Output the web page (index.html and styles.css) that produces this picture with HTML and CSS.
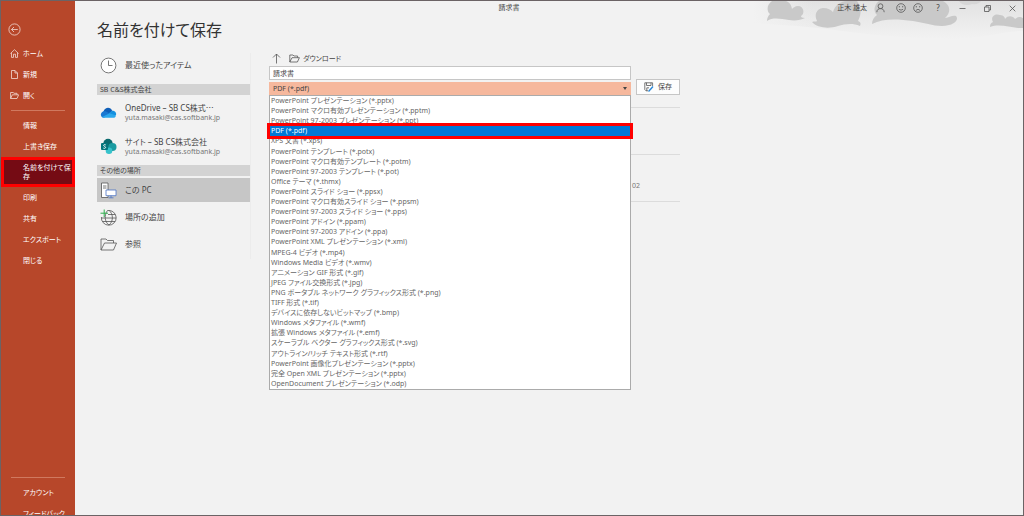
FILE: index.html
```html
<!DOCTYPE html>
<html lang="ja">
<head>
    <meta charset="UTF-8">
    <meta name="viewport" content="width=device-width, initial-scale=1.0">
    <title>名前を付けて保存</title>
    <link rel="stylesheet" href="styles.css">
</head>
<body>
    <nav class="sidebar">
        <button class="back-btn" aria-label="戻る">
            <svg width="13" height="13" viewBox="0 0 13 13"><circle cx="6.5" cy="6.5" r="5.6"/><path d="M9.8 6.5H3.5M6 4L3.5 6.5L6 9"/></svg>
        </button>
        <a class="nav-item" href="#">
            <svg width="9" height="9" viewBox="0 0 9 9"><path d="M.5 4.5L4.5.7L8.5 4.5M1.5 3.8V8.4H3.5V5.2H5.5V8.4H7.5V3.8"/></svg>
            ホーム
        </a>
        <a class="nav-item" href="#">
            <svg width="9" height="9" viewBox="0 0 9 9"><path d="M1.5.5H5L7.5 3V8.5H1.5ZM5 .5V3H7.5"/></svg>
            新規
        </a>
        <a class="nav-item" href="#">
            <svg width="9" height="9" viewBox="0 0 9 9"><path d="M.6 7.5V1.5H3.2L4 2.3H7V3.8M.6 7.5L2.3 3.8H8.6L7 7.5Z"/></svg>
            開く
        </a>
        <hr>
        <a class="nav-item" href="#">情報</a>
        <a class="nav-item" href="#">上書き保存</a>
        <a class="nav-item active" href="#">名前を付けて保存</a>
        <a class="nav-item" href="#">印刷</a>
        <a class="nav-item" href="#">共有</a>
        <a class="nav-item" href="#">エクスポート</a>
        <a class="nav-item" href="#">閉じる</a>
        <div class="nav-bottom">
            <hr>
            <a class="nav-item" href="#">アカウント</a>
            <a class="nav-item" href="#">フィードバック</a>
        </div>
    </nav>

    <main class="content">
        <svg class="clouds" width="270" height="40" viewBox="0 0 270 40">
            <defs>
                <linearGradient id="haze" x1="0" y1="0" x2="0" y2="1">
                    <stop offset="0" stop-color="#e2e2e2"/>
                    <stop offset="1" stop-color="#f2f2f2"/>
                </linearGradient>
                <linearGradient id="edge" x1="0" y1="0" x2="1" y2="0">
                    <stop offset="0" stop-color="#f2f2f2"/>
                    <stop offset="1" stop-color="#f2f2f2" stop-opacity="0"/>
                </linearGradient>
            </defs>
            <path fill="url(#haze)" d="M0 0H270V30C250 30 232 37 200 38C160 38 120 34 90 30C60 26 30 24 0 22Z"/>
            <rect fill="url(#edge)" width="60" height="40"/>
            <path fill="#c9c9c9" d="M19 0C13 4 14 11 17 13C15 15 14 17 14 20C20 16 28 18 36 19C42 20 48 19 52 17C49 17 48 16 48 15C52 13 51 5 45 5C42 5 40 7 39 8C38 3 36 1 33 0Z"/>
            <path fill="#c9c9c9" d="M59 21C61 20 63 21 64 20C61 14 63 8 70 7C75 7 78 9 80 11C82 4 88 0 94 0H104C108 5 109 13 105 20C108 21 108 23 107 25C100 22 92 23 85 25C76 28 64 27 59 21Z"/>
            <path fill="#c9c9c9" d="M126 0H190C198 4 198 12 192 17C196 17 199 14 203 15C206 18 202 23 196 24C185 27 174 22 160 20C145 18 130 17 119 23C119 19 121 16 124 14C120 10 121 4 126 0Z"/>
            <path fill="#d6d6d6" d="M206 0C208 4 214 5 219 3C223 4 227 2 228 0Z"/>
            <path fill="#c9c9c9" d="M237 26C237 23 238 22 240 21C237 16 242 12 247 14C251 14 252 17 252 18C255 14 260 15 262 18C265 15 268 16 270 17V27C260 28 248 22 237 26Z"/>
        </svg>

        <header class="titlebar">
            <span class="doc-title">請求書</span>
            <span class="user">正木 雄太</span>
            <svg class="person" width="9" height="10" viewBox="0 0 9 10"><circle cx="4.5" cy="3.2" r="2.4"/><path d="M.8 9.2C1 6.6 2.4 5.6 4.5 5.6S8 6.6 8.2 9.2"/></svg>
            <svg class="smile" width="10" height="10" viewBox="0 0 10 10"><circle cx="5" cy="5" r="4.3"/><path d="M3.3 3V4.4M6.7 3V4.4M2.9 6.3Q5 8 7.1 6.3"/></svg>
            <svg class="frown" width="10" height="10" viewBox="0 0 10 10"><circle cx="5" cy="5" r="4.3"/><path d="M3.3 3V4.4M6.7 3V4.4M2.9 7.4Q5 5.2 7.1 7.4"/></svg>
            <button class="help">?</button>
            <button class="win-btn" aria-label="最小化"><svg width="7" height="7" viewBox="0 0 7 7"><path d="M.5 3.5H6.5"/></svg></button>
            <button class="win-btn" aria-label="元に戻す"><svg width="7" height="7" viewBox="0 0 7 7"><path d="M.5 2H5V6.5H.5ZM2 2V.5H6.5V5H5"/></svg></button>
            <button class="win-btn" aria-label="閉じる"><svg width="7" height="7" viewBox="0 0 7 7"><path d="M.7.7L6.3 6.3M6.3.7L.7 6.3"/></svg></button>
        </header>

        <h1>名前を付けて保存</h1>

        <div class="panes">
            <section class="places">
                <a class="place recent" href="#">
                    <svg width="17" height="17" viewBox="0 0 17 17"><circle class="white" cx="8.5" cy="8.5" r="7.4"/><path d="M8.5 3.5V8.5H12.5"/></svg>
                    <span>最近使ったアイテム</span>
                </a>
                <h2>SB C&amp;S株式会社</h2>
                <a class="place account" href="#">
                    <svg class="solid" width="17" height="17" viewBox="0 0 17 17">
                        <path fill="#0f5fb8" d="M3.5 7.5C5 3 10.5 2.5 12.3 7L9 10L3 9Z"/>
                        <path fill="#1490df" d="M9 9L12.2 6.7C15 6.7 16.6 8.8 16 11L12 13Z"/>
                        <path fill="#1a78d2" d="M1 11.5C.3 8.6 3.2 6.4 6 7.4L11 10L4 13.7C2 13.7 1.2 12.5 1 11.5Z"/>
                        <path fill="#2ba7ec" d="M2 12.9L9.7 9.3L16 11.4C15.7 13 14.7 13.7 13.3 13.7H4Q2.7 13.7 2 12.9Z"/>
                    </svg>
                    <span>OneDrive – SB CS株式⋯<small>yuta.masaki@cas.softbank.jp</small></span>
                </a>
                <a class="place account" href="#">
                    <svg class="solid" width="17" height="17" viewBox="0 0 17 17">
                        <circle fill="#0b6a6e" cx="8" cy="5.5" r="4.7"/>
                        <circle fill="#1a9ba1" cx="12.4" cy="9" r="4.1"/>
                        <circle fill="#37c2cb" cx="9" cy="12.7" r="3.3"/>
                        <rect fill="#04757b" x="1" y="5" width="7" height="7" rx="1"/>
                        <path fill="none" stroke="#fff" stroke-width=".9" d="M5.8 7C5 6.3 3.6 6.5 3.6 7.4C3.6 8.6 5.6 8.2 5.6 9.5C5.6 10.5 4 10.6 3.3 10"/>
                    </svg>
                    <span>サイト – SB CS株式会社<small>yuta.masaki@cas.softbank.jp</small></span>
                </a>
                <h2>その他の場所</h2>
                <a class="place selected" href="#">
                    <svg width="17" height="17" viewBox="0 0 17 17"><path class="white" d="M1.5 1H8V15.5H1.5Z"/><path d="M3 4H6.5M3 6H6.5"/><path class="blue" d="M6 8H16V13.7H6ZM11 13.7V15.8M8.5 15.8H13.5"/></svg>
                    <span>この PC</span>
                </a>
                <a class="place" href="#">
                    <svg width="17" height="17" viewBox="0 0 17 17"><path d="M7.5 1.5A7.4 7.4 0 1 1 1.4 8M7.5 1.5C4 6 4.5 13 9 16M9 1.3C13.5 5 13.5 12.5 9 16M8 5.5H15.2M1.8 9H16.2M2.8 12.5H15.2"/><path class="green" d="M4.2.5V8M.5 4.2H8"/></svg>
                    <span>場所の追加</span>
                </a>
                <a class="place" href="#">
                    <svg width="17" height="17" viewBox="0 0 17 17"><path d="M1 14V3H6L7.5 4.5H13.5V7M1 14L4.5 7H16.5L13.5 14Z"/></svg>
                    <span>参照</span>
                </a>
            </section>

            <section class="save-form">
                <div class="path">
                    <button class="up-btn" aria-label="1 つ上のレベル"><svg width="9" height="11" viewBox="0 0 9 11"><path d="M4.5 10.5V1M1 4.5L4.5 1L8 4.5"/></svg></button>
                    <svg width="11" height="9" viewBox="0 0 11 9"><path d="M.8 8V1H4L5 2H8.6V3.7M.8 8L3 3.7H10.4L8.4 8Z"/></svg>
                    ダウンロード
                </div>
                <div class="form-row">
                    <div class="fields">
                        <input class="file-name" type="text" value="請求書" aria-label="ファイル名">
                        <div class="type-box">
                            <select class="file-type" aria-label="ファイルの種類">
                                <option>PDF (*.pdf)</option>
                            </select>
                            <ul class="type-list" role="listbox" aria-label="ファイルの種類">
                                <li role="option">PowerPoint プレゼンテーション (*.pptx)</li>
                                <li role="option">PowerPoint マクロ有効プレゼンテーション (*.pptm)</li>
                                <li role="option">PowerPoint 97-2003 プレゼンテーション (*.ppt)</li>
                                <li role="option" class="current" aria-selected="true">PDF (*.pdf)</li>
                                <li role="option">XPS 文書 (*.xps)</li>
                                <li role="option">PowerPoint テンプレート (*.potx)</li>
                                <li role="option">PowerPoint マクロ有効テンプレート (*.potm)</li>
                                <li role="option">PowerPoint 97-2003 テンプレート (*.pot)</li>
                                <li role="option">Office テーマ (*.thmx)</li>
                                <li role="option">PowerPoint スライド ショー (*.ppsx)</li>
                                <li role="option">PowerPoint マクロ有効スライド ショー (*.ppsm)</li>
                                <li role="option">PowerPoint 97-2003 スライド ショー (*.pps)</li>
                                <li role="option">PowerPoint アドイン (*.ppam)</li>
                                <li role="option">PowerPoint 97-2003 アドイン (*.ppa)</li>
                                <li role="option">PowerPoint XML プレゼンテーション (*.xml)</li>
                                <li role="option">MPEG-4 ビデオ (*.mp4)</li>
                                <li role="option">Windows Media ビデオ (*.wmv)</li>
                                <li role="option">アニメーション GIF 形式 (*.gif)</li>
                                <li role="option">JPEG ファイル交換形式 (*.jpg)</li>
                                <li role="option">PNG ポータブル ネットワーク グラフィックス形式 (*.png)</li>
                                <li role="option">TIFF 形式 (*.tif)</li>
                                <li role="option">デバイスに依存しないビットマップ (*.bmp)</li>
                                <li role="option">Windows メタファイル (*.wmf)</li>
                                <li role="option">拡張 Windows メタファイル (*.emf)</li>
                                <li role="option">スケーラブル ベクター グラフィックス形式 (*.svg)</li>
                                <li role="option">アウトライン/リッチ テキスト形式 (*.rtf)</li>
                                <li role="option">PowerPoint 画像化プレゼンテーション (*.pptx)</li>
                                <li role="option">完全 Open XML プレゼンテーション (*.pptx)</li>
                                <li role="option">OpenDocument プレゼンテーション (*.odp)</li>
                            </ul>
                        </div>
                    </div>
                    <button class="save-btn">
                        <svg width="10" height="10" viewBox="0 0 10 10"><path d="M.8.8H8.6V4M4 8.8H2L.8 7.6V.8M2.5.8V3.5H7V.8M2.8 8.8V5.8H5"/><path class="pen" d="M4.5 9.5L9 4.5"/></svg>
                        保存
                    </button>
                </div>
                <div class="files">
                    <div class="file-head"></div>
                    <div class="file-row"></div>
                    <div class="file-row">02</div>
                </div>
            </section>
        </div>
    </main>
</body>
</html>
```
FILE: styles.css
```css
* {
    margin: 0;
    padding: 0;
    box-sizing: border-box;
}

body {
    font-family: "Noto Sans", "Noto Sans CJK JP", sans-serif;
    font-feature-settings: "palt";
    font-size: 7px;
    line-height: 10px;
    color: #444;
    background: #f2f2f2;
    height: 100vh;
    display: flex;
    overflow: hidden;
    border: 1px solid #6b6365;
}

a {
    color: inherit;
    text-decoration: none;
}

button,
input,
select {
    font: inherit;
    font-feature-settings: inherit;
    color: inherit;
    background: none;
    border: none;
}

svg {
    display: block;
    flex: none;
    fill: none;
    stroke: #555;
    stroke-width: 0.8;
}

/* sidebar */
.sidebar {
    width: 74px;
    flex: none;
    display: flex;
    flex-direction: column;
    background: #b7472a;
    color: #fff;
    padding-top: 22px;
    overflow: hidden;
}

.sidebar svg {
    stroke: #f3dcd6;
}

.back-btn {
    align-self: flex-start;
    margin: 0 0 7px 7px;
}

.nav-item {
    flex: none;
    display: flex;
    align-items: center;
    gap: 4px;
    height: 21px;
    padding-left: 22px;
    line-height: 9px;
}

.nav-item svg {
    margin-left: -13px;
}

.nav-item.active {
    height: 30px;
    padding: 0 1px 0 19px;
    background: #750b14;
    border: 3px solid #f00;
}

.sidebar hr {
    flex: none;
    border: none;
    border-top: 1px solid #d0795f;
    margin: 4px 10px;
}

.nav-bottom {
    flex: none;
    height: 42px;
    margin-top: auto;
    overflow: hidden;
}

/* main area */
.content {
    flex: 1;
    min-width: 0;
    position: relative;
}

.clouds {
    position: absolute;
    top: 0;
    right: 0;
    stroke: none;
}

.titlebar {
    position: relative;
    height: 14px;
    display: flex;
    align-items: center;
    justify-content: flex-end;
    padding-right: 7px;
}

.doc-title {
    position: absolute;
    left: 0;
    right: 80px;
    text-align: center;
}

.person {
    margin-left: 9px;
}

.smile {
    margin-left: 11px;
}

.frown {
    margin-left: 7px;
}

.help {
    width: 8px;
    margin: 0 17px 0 11px;
    font-size: 8px;
}

.win-btn {
    margin-left: 18px;
}

.help + .win-btn {
    margin-left: 0;
}

h1 {
    font-size: 16px;
    font-weight: 400;
    line-height: 26px;
    padding-left: 22px;
    margin: 2px 0 10px;
    color: #333;
}

.panes {
    display: flex;
}

/* places list */
.places {
    width: 154px;
    flex: none;
    margin-left: 22px;
    border-right: 1px solid #ececec;
}

.places h2 {
    font-size: 7px;
    font-weight: 400;
    line-height: 11px;
    padding-left: 3px;
    margin-bottom: 2px;
    background: #d3d3d3;
}

.place {
    display: flex;
    align-items: center;
    gap: 8px;
    height: 24px;
    margin-bottom: 3px;
    padding-left: 3px;
    font-size: 8px;
}

.place.recent {
    margin-bottom: 7px;
}

.place.account {
    height: 31px;
}

.place.selected {
    background: #c6c6c6;
}

.place small {
    display: block;
    font-size: 7px;
    line-height: 9px;
    color: #777;
}

.solid {
    stroke: none;
}

.white {
    fill: #fff;
}

.blue {
    fill: #fff;
    stroke: #4a72c4;
}

.green {
    stroke: #2fae4e;
    stroke-width: 1;
}

/* save form */
.save-form {
    width: 411px;
    margin-left: 18px;
}

.path {
    display: flex;
    align-items: center;
    gap: 3px;
    height: 11px;
    font-size: 7px;
    margin-bottom: 2px;
}

.up-btn {
    margin: 0 5px 0 3px;
}

.form-row {
    display: flex;
    align-items: flex-end;
    gap: 5px;
}

.fields {
    flex: 1;
}

.file-name {
    display: block;
    width: 100%;
    height: 14px;
    padding: 0 3px;
    background: #fff;
    border: 1px solid #c6c6c6;
    margin-bottom: 2px;
}

.type-box {
    position: relative;
}

.type-box::after {
    content: "";
    position: absolute;
    top: 5px;
    right: 4px;
    border: 2px solid transparent;
    border-top: 3px solid #444;
    border-bottom: none;
}

.file-type {
    display: block;
    appearance: none;
    width: 100%;
    height: 13px;
    padding: 0 4px;
    background: #f6b89d;
}

.type-list {
    position: absolute;
    top: 100%;
    left: 0;
    right: 0;
    z-index: 1;
    height: 295px;
    display: grid;
    grid-auto-rows: 1fr;
    list-style: none;
    background: #fff;
    border: 1px solid #ababab;
    color: #666;
}

.type-list li {
    padding-left: 1px;
    line-height: 10px;
    white-space: nowrap;
}

.type-list .current {
    position: relative;
    background: #0078d7;
    color: #fff;
    outline: 3px solid #f00;
}

.save-btn {
    width: 44px;
    height: 16px;
    display: flex;
    align-items: center;
    justify-content: center;
    gap: 4px;
    background: #fdfdfd;
    border: 1px solid #c6c6c6;
}

.pen {
    stroke: #2b88d8;
    stroke-width: 1.4;
}

.file-head {
    height: 13px;
    border-bottom: 1px solid #dcdcdc;
}

.file-row {
    display: flex;
    align-items: center;
    justify-content: flex-end;
    height: 47px;
    padding: 16px 40px 0 0;
    border-bottom: 1px solid #dcdcdc;
    color: #777;
}
```
